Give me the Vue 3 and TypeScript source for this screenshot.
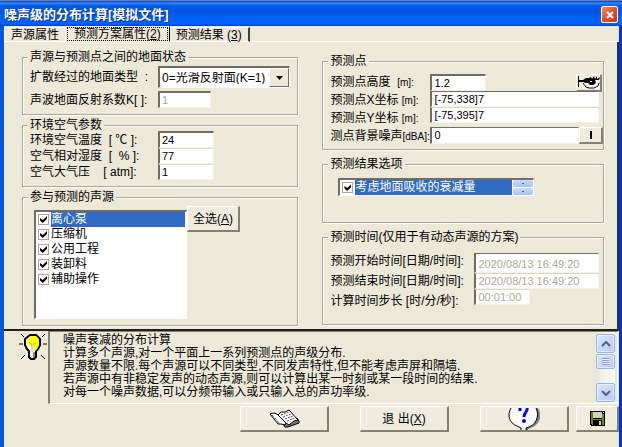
<script setup lang="ts">
import { ref } from 'vue'

interface Source { name: string; on: boolean }

const sources = ref<Source[]>([
  { name: '离心泵', on: true },
  { name: '压缩机', on: true },
  { name: '公用工程', on: true },
  { name: '装卸料', on: true },
  { name: '辅助操作', on: true },
])
const selected = ref(0)
const ground = ref('0')
const factor = ref('1')
const temperature = ref('24')
const humidity = ref('77')
const pressure = ref('1')
const height = ref('1.2')
const pointX = ref('[-75,338]7')
const pointY = ref('[-75,395]7')
const background = ref('0')
const absorb = ref(true)
const startTime = ref('2020/08/13 16:49:20')
const endTime = ref('2020/08/13 16:49:20')
const step = ref('00:01:00')
const help = [
  '噪声衰减的分布计算',
  '计算多个声源,对一个平面上一系列预测点的声级分布.',
  '声源数量不限.每个声源可以不同类型,不同发声特性,但不能考虑声屏和隔墙.',
  '若声源中有非稳定发声的动态声源,则可以计算出某一时刻或某一段时间的结果.',
  '对每一个噪声数据,可以分频带输入或只输入总的声功率级.',
].join('\n')
const helpBox = ref<HTMLTextAreaElement | null>(null)

function selectAll(): void {
  sources.value.forEach((s) => { s.on = true })
}
function scrollHelp(lines: number): void {
  helpBox.value?.scrollBy(0, lines * 13)
}
</script>

<template>
  <main class="window">
    <header class="titlebar">
      <h1>噪声级的分布计算[模拟文件]</h1>
      <button class="close" type="button" aria-label="关闭">
        <svg viewBox="0 0 8 8" width="8" height="8"><path d="M1 1L7 7M7 1L1 7" stroke="#fff" stroke-width="2" /></svg>
      </button>
    </header>

    <div class="client">
      <nav class="tabs" role="tablist">
        <button class="tab first" type="button" role="tab" aria-selected="false">声源属性</button>
        <button class="tab active" type="button" role="tab" aria-selected="true"><span class="focus">预测方案属性(<u>2</u>)</span></button>
        <button class="tab last" type="button" role="tab" aria-selected="false">预测结果 (<u>3</u>)</button>
        <span class="tab-rest"></span>
      </nav>

      <section class="page">
        <div class="column">
          <fieldset class="ground">
            <legend>声源与预测点之间的地面状态</legend>
            <div class="field">
              <label for="ground">扩散经过的地面类型&nbsp; :</label>
              <span class="combo">
                <select id="ground" v-model="ground"><option value="0">0=光滑反射面(K=1)</option></select>
                <span class="arrow" aria-hidden="true"><svg viewBox="0 0 7 4" width="7" height="4"><path d="M0 0H7L3.500 4Z" /></svg></span>
              </span>
            </div>
            <div class="field">
              <label for="factor">声波地面反射系数K[ ]:</label>
              <input id="factor" v-model="factor" class="box short" disabled>
            </div>
          </fieldset>

          <fieldset class="air">
            <legend>环境空气参数</legend>
            <div class="field"><label for="temp">环境空气温度&nbsp; [ ℃ ]:</label><input id="temp" v-model="temperature" class="box small"></div>
            <div class="field"><label for="hum">空气相对湿度&nbsp; [&nbsp; %&nbsp;]:</label><input id="hum" v-model="humidity" class="box small"></div>
            <div class="field"><label for="pres">空气大气压&nbsp; &nbsp; [ atm]:</label><input id="pres" v-model="pressure" class="box small"></div>
          </fieldset>

          <fieldset class="sources">
            <legend>参与预测的声源</legend>
            <ul class="list">
              <li v-for="(s, i) in sources" :key="s.name" @click="selected = i">
                <label class="item" :class="{ selected: i === selected }"><input v-model="s.on" type="checkbox"><span>{{ s.name }}</span></label>
              </li>
            </ul>
            <button class="btn all" type="button" @click="selectAll">全选(<u>A</u>)</button>
          </fieldset>
        </div>

        <div class="column right">
          <fieldset class="point">
            <legend>预测点</legend>
            <div class="labels">
              <label for="height">预测点高度&nbsp; <span class="unit">[m]:</span></label>
              <label for="px">预测点X坐标 <span class="unit">[m]:</span></label>
              <label for="py">预测点Y坐标 <span class="unit">[m]:</span></label>
              <label for="bg">测点背景噪声<span class="unit">[dBA]:</span></label>
            </div>
            <div class="inputs">
              <div class="line split">
                <input id="height" v-model="height" class="box small">
                <button class="btn eye" type="button" aria-label="查看预测点">
                  <svg viewBox="0 0 23 15" width="23" height="15">
                    <path fill="#fff" d="M8 9L11 5L17 4L22 6V14H12L7 10Z" />
                    <path d="M1 1H2V5L6 5L9 3H12L14 2L15 4L17 1L18 4L20 1L20 4L23 2L22 5L18 5L19 7L18 9L16 10H13L11 8H8L7 7L2 7V12H1Z" />
                    <path d="M13 6H15V7H13Z" fill="#fff" />
                    <path fill="none" stroke="#000" d="M6 8L9 12L12 13H17L21 11L22 8" />
                  </svg>
                </button>
              </div>
              <input id="px" v-model="pointX" class="box wide">
              <input id="py" v-model="pointY" class="box wide">
              <div class="line noise">
                <input id="bg" v-model="background" class="box">
                <button class="btn pick" type="button" aria-label="选择背景噪声"><span class="bar"></span></button>
              </div>
            </div>
          </fieldset>

          <fieldset class="options">
            <legend>预测结果选项</legend>
            <div class="option">
              <label class="item selected"><input v-model="absorb" type="checkbox"><span>考虑地面吸收的衰减量</span></label>
              <span class="spin">
                <button type="button" aria-label="上移"></button>
                <button type="button" aria-label="下移"></button>
              </span>
            </div>
          </fieldset>

          <fieldset class="time">
            <legend>预测时间(仅用于有动态声源的方案)</legend>
            <div class="labels">
              <label for="start">预测开始时间[日期/时间]:</label>
              <label for="end">预测结束时间[日期/时间]:</label>
              <label for="step">计算时间步长 [时/分/秒]:</label>
            </div>
            <div class="inputs">
              <input id="start" v-model="startTime" class="box tall wide" disabled>
              <input id="end" v-model="endTime" class="box wide" disabled>
              <input id="step" v-model="step" class="box small" disabled>
            </div>
          </fieldset>
        </div>
      </section>

      <section class="help">
        <svg class="bulb" viewBox="0 0 28 28" width="28" height="28">
          <path d="M2 1L5 4M26 1L23 4M0 11H4M24 11H28M2 26L6 22M26 26L22 22" stroke="#000" fill="none" />
          <path d="M11 2H17L21 6V12L19 16L17 18V21H10V18L8 16L6 12V6Z" fill="#fff" stroke="#000" stroke-width="2" stroke-linejoin="round" />
          <path d="M12 3H17L20 6V12L18 16L16 18H15V14L12 12L9 13L8 10L10 5Z" fill="#ff0" />
          <path d="M10 9L13 12V19M17 9L14 12" stroke="#aca899" fill="none" />
          <path d="M11 19H14V25H12L11 24Z" fill="#fff" />
          <path d="M14 19H17V24L15 25H14Z" fill="#888" />
          <path d="M10 19V24L12 26H15L17 24V19" stroke="#000" stroke-width="2" fill="none" />
        </svg>
        <div class="memo">
          <textarea ref="helpBox" readonly aria-label="说明" :value="help"></textarea>
          <div class="scroll">
            <button type="button" aria-label="向上滚动" @click="scrollHelp(-1)"><svg viewBox="0 0 10 6" width="10" height="6"><path d="M1 5L5 1L9 5" /></svg></button>
            <span class="thumb"></span>
            <button class="down" type="button" aria-label="向下滚动" @click="scrollHelp(1)"><svg viewBox="0 0 10 6" width="10" height="6"><path d="M1 1L5 5L9 1" /></svg></button>
          </div>
        </div>
      </section>

      <footer class="actions">
        <div class="main-actions">
          <button class="btn" type="button" aria-label="手册">
            <svg viewBox="0 0 31 19" width="31" height="19">
              <path d="M14 15L28 9L30 12V14L19 18H16Z" fill="#777" stroke="#000" />
              <path d="M1 5L5 4L8 5L17 14L16 16L12 15L9 15Z" fill="#fff" stroke="#000" />
              <path d="M9 6L12 3L16 3L20 1L29 11L25 12L20 16L17 14Z" fill="#fff" stroke="#000" />
              <path d="M12 6L20 3M14 8L22 5M16 10L24 7M18 12L26 9" stroke="#555" stroke-dasharray="2 1" />
              <path d="M3 6L11 15" stroke="#000" stroke-dasharray="1 1" />
            </svg>
          </button>
          <button class="btn" type="button">退 出(<u>X</u>)</button>
          <button class="btn" type="button" aria-label="帮助">
            <svg viewBox="0 0 32 22" width="32" height="22">
              <path d="M6 0H30C34 6 33 15 25 19L20 21V22H17V19C7 18 2 8 6 0Z" fill="#808080" />
              <path d="M3 0C-1 7 1 15 9 18L13 20V22H18V20C28 18 32 8 28 0Z" fill="#fff" />
              <path d="M3 0C-1 7 1 15 9 18L13 20V22M18 22V20C28 18 32 8 28 0" fill="none" stroke="#000" />
              <path d="M12 0V3M19 0C20 4 16 4 16 9" fill="none" stroke="#00f" stroke-width="3" />
              <circle cx="16" cy="13" r="2" fill="#00f" />
            </svg>
          </button>
        </div>
        <button class="btn save" type="button" aria-label="保存">
          <svg viewBox="0 0 15 15" width="15" height="15" shape-rendering="crispEdges">
            <path d="M0 0H15V15H1L0 14Z" />
            <path d="M1 1H3V8H12V3H14V14H2L1 13Z" fill="#808000" />
            <path d="M3 1H12V7H3Z" fill="#d4d0c8" /><path d="M13 1H14V2H13Z" fill="#fff" />
            <path d="M3 9H12V14H3Z" /><path d="M9 10H11V14H9Z" fill="#d4d0c8" />
          </svg>
        </button>
      </footer>
    </div>
  </main>
</template>

<style>
html, body, #app { height: 100%; }
body { margin: 0; background: #ece9d8; }
</style>

<style scoped>
* { box-sizing: border-box; }
.window {
  min-height: 100%;
  display: flex;
  flex-direction: column;
  background: #ece9d8;
  color: #000;
  font: 12px/12px "Liberation Sans", "Noto Sans CJK SC", sans-serif;
}
button, input, select, textarea { font: inherit; color: inherit; margin: 0; border-radius: 0; }
button { padding: 0; display: flex; align-items: center; justify-content: center; white-space: pre; }
label { white-space: nowrap; }
svg { display: block; flex: none; }

.titlebar {
  height: 26px;
  padding: 2px 4px 0 4px;
  display: flex;
  align-items: center;
  justify-content: space-between;
  border-top: 1px solid #747b8c;
  background: linear-gradient(#0831d9 0, #2a8cff 2px, #0058e6 5px, #0055e5 12px, #0066ff 20px, #0060fc 23px, #0040c8 25px);
}
h1 { margin: 0; color: #fff; font-size: 13px; line-height: 20px; font-weight: 700; text-shadow: 1px 1px #0a2a90; white-space: nowrap; }
.close { width: 17px; height: 17px; border: 1px solid #fff; border-radius: 2px; background: linear-gradient(135deg, #f0906c, #e0502c 50%, #c43a14); }

.client { flex: 1; border-left: 4px solid #0855dd; border-right: 3px solid #0037c8; }
.tabs { display: flex; height: 16px; }
.tab { height: 16px; border: 0; border-top: 1px solid #fff; border-bottom: 1px solid #fff; background: none; padding: 0 6px; }
.first { border-left: 1px solid #fff; margin-top: 1px; height: 15px; }
.active { border-bottom-color: #ece9d8; border-left: 1px solid #fff; border-right: 1px solid #000; padding: 0 1px; }
.focus { border: 1px dotted #000; padding: 0 6px; line-height: 12px; }
.last { margin-top: 1px; height: 15px; border-right: 2px solid #404040; padding: 0 6px; }
.tab-rest { flex: 1; border-bottom: 1px solid #fff; }

.page {
  display: grid;
  grid-template-columns: minmax(0, 276fr) minmax(0, 281fr);
  column-gap: 24px;
  padding: 9px 13px 3px 18px;
  border-right: 2px solid #303030;
  border-bottom: 2px solid #202020;
}
.column { display: flex; flex-direction: column; gap: 4px; }
.right { padding-top: 4px; gap: 8px; }
fieldset { margin: 0; min-width: 0; padding: 0 7px; border: 1px solid #aca899; box-shadow: 1px 1px #fff, inset 1px 1px #fff; }
legend { padding: 0 2px; margin-left: -2px; line-height: 12px; background: #ece9d8; white-space: nowrap; }
.field { display: grid; grid-template-columns: 128px minmax(0, 1fr); align-items: center; }
.box {
  height: 16px;
  width: 100%;
  padding: 0 2px 1px 2px;
  border: 1px solid #f4f2e8;
  border-top-color: #dcd8c8;
  border-left: 2px solid #706e64;
  background: #fff;
  font-size: 11px;
  line-height: 13px;
  outline: 0;
}
.box:disabled { color: #aca899; }
.small { width: 56px; }
.short { width: 53px; }
.wide { width: 100%; }

.ground { padding-top: 3px; padding-bottom: 6px; display: grid; row-gap: 3px; }
.ground .box, .air .field:nth-of-type(1) .box { border-top: 2px solid #706e64; height: 17px; }
.combo { display: grid; border: 2px solid #706e64; border-right: 1px solid #fff; border-bottom: 1px solid #fff; background: #fff; height: 22px; }
.combo > * { grid-area: 1 / 1; }
.combo select { appearance: none; border: 0; background: none; padding: 0 2px; width: 100%; outline: 0; }
.arrow { justify-self: end; width: 20px; display: grid; place-items: center; background: #ece9d8; border: 1px solid #fff; border-right-color: #706e64; border-bottom-color: #706e64; pointer-events: none; }

.air { padding-bottom: 6px; }

.sources { display: flex; align-items: flex-start; padding: 3px 4px 6px 11px; }
.sources legend { margin-left: -6px; }
.list { list-style: none; width: 153px; min-height: 109px; margin: 4px 0 0; padding: 0 1px 0 2px; background: #fff; border: 1px solid #fff; border-top: 2px solid #706e64; border-left: 2px solid #706e64; }
.item { display: flex; align-items: center; height: 15px; gap: 2px; }
.item span { flex: 1; line-height: 15px; height: 15px; }
.item.selected span { background: #316ac5; color: #fff; }
input[type="checkbox"] { appearance: none; flex: none; width: 11px; height: 11px; border: 1px solid #aca899; background: #fff; display: grid; place-items: center; }
input[type="checkbox"]:checked::before { content: ""; width: 7px; height: 7px; background: #000; clip-path: polygon(0 28%, 40% 58%, 100% 0, 100% 40%, 40% 100%, 0 66%); }

.btn { background: #efecdf; border: 1px solid #fff; border-right: 2px solid #85816f; border-bottom: 2px solid #85816f; }
.all { width: 53px; height: 26px; }

.point, .time { display: flex; align-items: flex-start; }
.labels { flex: none; display: flex; flex-direction: column; }
.inputs { flex: 1; min-width: 0; display: flex; flex-direction: column; }
.point { padding: 7px 0 5px 7px; }
.point .labels { width: 100px; line-height: 16px; row-gap: 2px; }
.point .labels label { height: 16px; }
.unit { font-size: 10px; }
.point .wide { width: calc(100% - 4px); }
.line { display: flex; }
.split { justify-content: space-between; padding-right: 1px; }
.split .box { border-top: 2px solid #706e64; height: 17px; }
#px, .noise .box, .tall { border-top: 1px solid #706e64; }
.eye { width: 26px; height: 18px; margin-bottom: -1px; overflow: hidden; }
.noise { margin-top: 4px; }
.noise .box { flex: 1; min-width: 0; height: 17px; }
.pick { width: 24px; height: 17px; }
.bar { width: 2px; height: 8px; background: #000; }

.options { padding: 8px 4px 26px 15px; }
.options legend { margin-left: -10px; }
.option { display: flex; width: 196px; height: 18px; padding-left: 2px; background: #fff; border: 1px solid #fff; border-top: 2px solid #706e64; border-left: 2px solid #706e64; }
.option .item { flex: 1; }
.spin { width: 21px; display: grid; grid-template-rows: 1fr 1fr; row-gap: 1px; padding-left: 1px; }
.spin button { border: 0; border-radius: 2px; background: linear-gradient(#cbdafd, #a8c0f4); }
.spin button::before { content: ""; width: 2px; height: 1px; background: #4d6185; }

.time { padding: 10px 4px 13px 7px; }
.time .labels { width: 144px; line-height: 20px; margin-top: -2px; }
.tall { height: 20px; padding-top: 2px; }

.help { display: flex; gap: 1px; padding: 0 1px 0 15px; }
.bulb { margin-top: 2px; }
.memo { flex: 1; min-width: 0; display: flex; height: 73px; border: 1px solid #fff; border-top: 1px solid #85816f; border-left: 2px solid #85816f; padding-right: 2px; }
textarea { flex: 1; min-width: 0; padding: 2px 0 0 13px; line-height: 13px; border: 0; background: none; resize: none; overflow: hidden; outline: 0; }
.scroll { width: 19px; display: flex; flex-direction: column; gap: 1px; padding: 2px 0 1px; background: linear-gradient(90deg, #ece9d8, #fdfdfa); }
.scroll button, .thumb { border: 1px solid #98b4f0; border-radius: 2px; background: linear-gradient(135deg, #dbe6ff, #b4c9fa); box-shadow: inset 0 0 0 1px #fff8; }
.scroll button { height: 19px; }
.scroll path { fill: none; stroke: #4d6185; stroke-width: 2; }
.thumb { height: 15px; display: grid; place-items: center; }
.thumb::before { content: ""; width: 7px; height: 7px; background: repeating-linear-gradient(#7f9fe0 0 1px, #eef4ff 1px 2px); }
.scroll .down { margin-top: auto; }

.actions { display: flex; justify-content: flex-end; gap: 7px; padding: 2px 0 13px; }
.main-actions { display: flex; gap: 31px; }
.actions .btn { width: 89px; height: 26px; overflow: hidden; }
.actions .save { width: 43px; }
</style>
